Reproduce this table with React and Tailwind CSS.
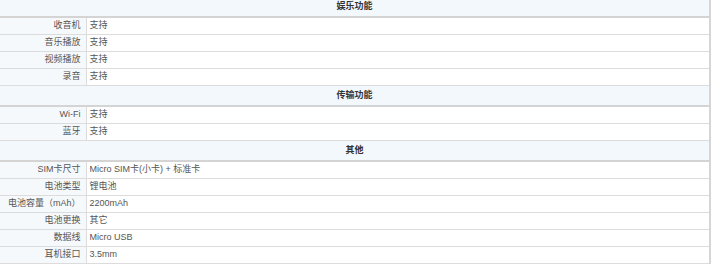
import React from "react";

const sections = [
  {
    title: "娱乐功能",
    rows: [
      ["收音机", "支持"],
      ["音乐播放", "支持"],
      ["视频播放", "支持"],
      ["录音", "支持"],
    ],
  },
  {
    title: "传输功能",
    rows: [
      ["Wi-Fi", "支持"],
      ["蓝牙", "支持"],
    ],
  },
  {
    title: "其他",
    rows: [
      ["SIM卡尺寸", "Micro SIM卡(小卡) + 标准卡"],
      ["电池类型", "锂电池"],
      ["电池容量（mAh）", "2200mAh"],
      ["电池更换", "其它"],
      ["数据线", "Micro USB"],
      ["耳机接口", "3.5mm"],
    ],
  },
];

export default function App() {
  return (
    <div className="w-[713px] h-[269px] overflow-hidden bg-white font-['Liberation_Sans','Noto_Sans_CJK_SC',sans-serif] text-[9px]">
      <table className="-mt-1 w-[711px] border-collapse border-r-2 border-[#d6d6d6] table-fixed">
        <colgroup>
          <col className="w-[86px]" />
          <col />
        </colgroup>
        <tbody>
          {sections.map((s) => (
            <React.Fragment key={s.title}>
              <tr>
                <th
                  colSpan={2}
                  className="h-[21px] bg-[#f3f8fd] border-b-2 border-[#d4d4d4] text-center font-bold text-[#333] leading-none p-0"
                >
                  {s.title}
                </th>
              </tr>
              {s.rows.map(([k, v]) => (
                <tr key={k}>
                  <td className="h-[17px] bg-[#f6f9fc] border-b border-r border-[#dcdcdc] text-right pr-[5px] text-[#555] leading-none whitespace-nowrap p-0">
                    {k}
                  </td>
                  <td className="h-[17px] bg-white border-b border-[#dcdcdc] pl-[3px] text-[#555] leading-none p-0">
                    {v}
                  </td>
                </tr>
              ))}
            </React.Fragment>
          ))}
        </tbody>
      </table>
    </div>
  );
}
